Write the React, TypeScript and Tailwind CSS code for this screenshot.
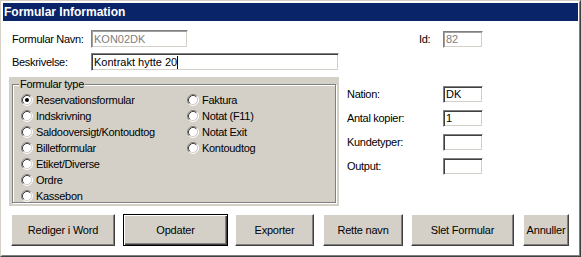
import React from 'react';

const Radio: React.FC<{ checked?: boolean }> = ({ checked }) => (
  <svg width="12" height="12" viewBox="0 0 12 12" className="flex-shrink-0">
    <circle cx="6" cy="6" r="4.5" fill="#fff" />
    <path d="M2.11 9.89 A5.5 5.5 0 0 1 9.89 2.11" fill="none" stroke="#808080" />
    <path d="M9.89 2.11 A5.5 5.5 0 0 1 2.11 9.89" fill="none" stroke="#fff" />
    <path d="M2.82 9.18 A4.5 4.5 0 0 1 9.18 2.82" fill="none" stroke="#404040" />
    <path d="M9.18 2.82 A4.5 4.5 0 0 1 2.82 9.18" fill="none" stroke="#d4d0c8" />
    {checked && <circle cx="6" cy="6" r="2" fill="#000" />}
  </svg>
);

const Field: React.FC<{ value?: string; width: string; height?: string; disabled?: boolean; caret?: boolean }> = ({
  value,
  width,
  height = 'h-[18px]',
  disabled,
  caret,
}) => (
  <div
    className={`${width} ${height} bg-white border border-t-[#808080] border-l-[#808080] border-b-white border-r-white ${
      disabled
        ? 'shadow-[inset_1px_1px_0_#a0a0a0,inset_-1px_-1px_0_#d4d0c8] text-[#808080]'
        : 'shadow-[inset_1px_1px_0_#404040,inset_-1px_-1px_0_#d4d0c8] text-black'
    } flex items-center pl-[2px] text-[11px] tracking-normal`}
  >
    {value}
    {caret && <span className="inline-block w-px h-[13px] bg-black" />}
  </div>
);

const Button: React.FC<{ label: string; width: string; ml: string; isDefault?: boolean }> = ({ label, width, ml, isDefault }) => (
  <div
    className={`${width} ${ml} h-[32px] bg-[#d4d0c8] flex items-center justify-center text-[11px] tracking-[-0.2px] text-black whitespace-nowrap ${
      isDefault
        ? 'border border-black shadow-[inset_1px_1px_0_#fff,inset_-1px_-1px_0_#404040,inset_-2px_-2px_0_#808080]'
        : 'border border-t-white border-l-white border-r-[#404040] border-b-[#404040] shadow-[inset_-1px_-1px_0_#808080]'
    }`}
  >
    {label}
  </div>
);

const leftTypes = [
  'Reservationsformular',
  'Indskrivning',
  'Saldooversigt/Kontoudtog',
  'Billetformular',
  'Etiket/Diverse',
  'Ordre',
  'Kassebon',
];
const rightTypes = ['Faktura', 'Notat (F11)', 'Notat Exit', 'Kontoudtog'];

const extraFields = [
  { label: 'Nation:', value: 'DK' },
  { label: 'Antal kopier:', value: '1' },
  { label: 'Kundetyper:', value: '' },
  { label: 'Output:', value: '' },
];

export default function App() {
  return (
    <div className="w-[581px] h-[257px] border border-t-[#d4d0c8] border-l-[#d4d0c8] border-r-[#404040] border-b-[#404040] font-['Liberation_Sans',Arial,sans-serif] text-black">
      <div className="h-full border border-t-white border-l-white border-r-[#808080] border-b-[#808080] bg-white p-px flex flex-col">
        {/* Title bar */}
        <div className="h-[18px] bg-[#0a246a] text-white font-bold text-[12px] leading-[18px] pl-px">
          Formular Information
        </div>

        {/* Navn + Id */}
        <div className="mt-[9px] h-[18px] flex items-center text-[11px] tracking-[-0.3px]">
          <span className="ml-[9px] w-[79px]">Formular Navn:</span>
          <Field value="KON02DK" width="w-[97px]" disabled />
          <span className="ml-[231px] w-[24px]">Id:</span>
          <Field value="82" width="w-[40px]" height="h-[17px]" disabled />
        </div>

        {/* Beskrivelse */}
        <div className="mt-[5px] h-[18px] flex items-center text-[11px] tracking-[-0.3px]">
          <span className="ml-[9px] w-[79px]">Beskrivelse:</span>
          <Field value="Kontrakt hytte 20" width="w-[248px]" caret />
        </div>

        {/* Type group + extra fields */}
        <div className="mt-[6px] flex">
          <div className="ml-[6px] w-[330px] h-[129px] bg-[#d4d0c8] px-[3px] pb-[3px]">
            <fieldset className="h-full border border-[#808080] shadow-[1px_1px_0_#fff,inset_1px_1px_0_#fff]">
              <legend className="ml-[6px] px-px bg-[#d4d0c8] text-[11px] leading-[14px] tracking-[-0.3px]">
                Formular type
              </legend>
              <div className="flex pl-[8px] pt-px text-[11px] tracking-[-0.3px]">
                <div className="w-[166px] flex flex-col">
                  {leftTypes.map((t, i) => (
                    <div key={t} className="h-[16px] flex items-center gap-[3px]">
                      <Radio checked={i === 0} />
                      <span>{t}</span>
                    </div>
                  ))}
                </div>
                <div className="flex flex-col">
                  {rightTypes.map((t) => (
                    <div key={t} className="h-[16px] flex items-center gap-[3px]">
                      <Radio />
                      <span>{t}</span>
                    </div>
                  ))}
                </div>
              </div>
            </fieldset>
          </div>

          <div className="ml-[8px] pt-[9px] flex flex-col gap-[7px] text-[11px] tracking-[-0.3px]">
            {extraFields.map((f) => (
              <div key={f.label} className="h-[17px] flex items-center">
                <span className="w-[96px]">{f.label}</span>
                <Field value={f.value} width="w-[40px]" height="h-[17px]" />
              </div>
            ))}
          </div>
        </div>

        {/* Buttons */}
        <div className="mt-[8px] flex">
          <Button label="Rediger i Word" width="w-[104px]" ml="ml-[8px]" />
          <Button label="Opdater" width="w-[105px]" ml="ml-[8px]" isDefault />
          <Button label="Exporter" width="w-[79px]" ml="ml-[7px]" />
          <Button label="Rette navn" width="w-[80px]" ml="ml-[9px]" />
          <Button label="Slet Formular" width="w-[103px]" ml="ml-[8px]" />
          <Button label="Annuller" width="w-[46px]" ml="ml-[9px]" />
        </div>
      </div>
    </div>
  );
}
